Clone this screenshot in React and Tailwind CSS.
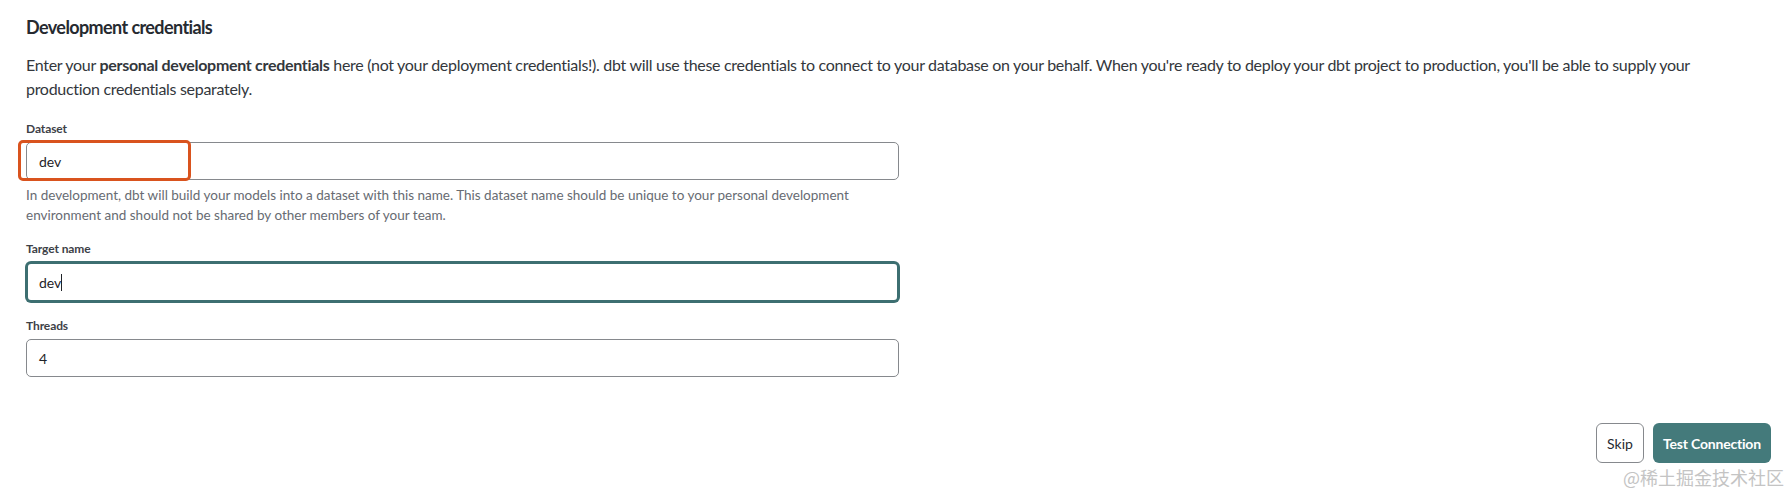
import React from 'react';

const font = { fontFamily: 'Lato, "Noto Sans", sans-serif' };

const Field = ({ label, value, focused, highlight, help }) => {
  return (
    <div className="flex flex-col">
      <label className="text-[12px] leading-[16px] font-bold text-[#3d4147] tracking-[-0.1px]">{label}</label>
      <div className="relative mt-[5px] w-[873px]">
        <div
          className={`rounded-[5px] bg-white flex items-center text-[14px] text-[#1f2328] ${
            focused
              ? 'h-[40px] border-2 border-[#3d6f71] ring-1 ring-[#3d6f71] px-[11px]'
              : 'h-[38px] border border-[#86898d] px-[12px]'
          }`}
        >
          <span>{value}</span>
          {focused && <span className="w-px h-[17px] bg-[#1f2328]" />}
        </div>
        {highlight && (
          <div className="absolute -left-[8px] -top-[2px] w-[173px] h-[41px] rounded-[5px] border-[3px] border-[#d9531e]" />
        )}
      </div>
      {help && (
        <p className="mt-[5px] text-[13.5px] leading-[20px] text-[#676b72] w-[873px]">{help}</p>
      )}
    </div>
  );
};

export default function App() {
  return (
    <div className="relative w-[1792px] h-[492px] bg-white overflow-hidden" style={font}>
      <div className="pl-[26px] pr-[21px] pt-[13px]">
        <h2 className="text-[18px] leading-[28px] font-bold text-[#262a30] tracking-[-0.6px]">
          Development credentials
        </h2>
        <p className="mt-[12px] text-[16px] leading-[24px] text-[#33373c] pr-[10px] tracking-[-0.3px]">
          Enter your <strong className="font-bold">personal development credentials</strong> here (not your deployment
          credentials!). dbt will use these credentials to connect to your database on your behalf. When you're ready to
          deploy your dbt project to production, you'll be able to supply your production credentials separately.
        </p>

        <div className="mt-[20px] flex flex-col">
          <Field
            label="Dataset"
            value="dev"
            highlight
            help="In development, dbt will build your models into a dataset with this name. This dataset name should be unique to your personal development environment and should not be shared by other members of your team."
          />
          <div className="mt-[16px]">
            <Field label="Target name" value="dev" focused />
          </div>
          <div className="mt-[16px]">
            <Field label="Threads" value="4" />
          </div>
        </div>

        <div className="mt-[46px] flex justify-end gap-[9px]">
          <button className="h-[40px] w-[48px] rounded-[6px] border border-[#86898d] bg-white text-[14px] text-[#262a30]">
            Skip
          </button>
          <button className="h-[40px] w-[118px] rounded-[6px] bg-[#447a7b] text-[14px] font-bold text-white tracking-[-0.2px]">
            Test Connection
          </button>
        </div>
      </div>

      <div
        className="absolute right-[8px] bottom-[4px] text-[18px] leading-[22px] text-[#c4c4c4]"
        style={{ fontFamily: '"Noto Sans CJK SC", sans-serif' }}
      >
        @稀土掘金技术社区
      </div>
    </div>
  );
}
